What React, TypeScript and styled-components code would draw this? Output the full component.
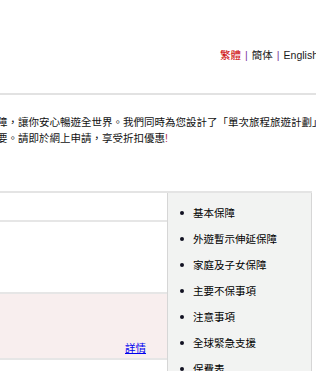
import React from "react";
import styled, { createGlobalStyle } from "styled-components";

const GlobalStyle = createGlobalStyle`
  html, body {
    margin: 0;
    padding: 0;
    overflow: hidden;
    background: #ffffff;
  }
  body {
    font-family: "Liberation Sans", "Noto Sans CJK TC", Arial, sans-serif;
    font-size: 10.5px;
    color: #111111;
  }
`;

const LINKS = [
  { label: "繁體", active: true },
  { label: "簡体", active: false },
  { label: "English", active: false },
];

const MENU = [
  "基本保障",
  "外遊暫示伸延保障",
  "家庭及子女保障",
  "主要不保事項",
  "注意事項",
  "全球緊急支援",
  "保費表",
];

const App = () => {
  return (
    <Page>
      <GlobalStyle />
      <Header>
        <LangNav>
          {LINKS.map((l, i) => (
            <React.Fragment key={l.label}>
              {i > 0 && <Pipe>|</Pipe>}
              <LangLink href="#" active={l.active}>
                {l.label}
              </LangLink>
            </React.Fragment>
          ))}
        </LangNav>
      </Header>

      <Intro>
        <Line>障，讓你安心暢遊全世界。我們同時為您設計了「單次旅程旅遊計劃」</Line>
        <Line>
          要。請即於網上申請，享受折扣優惠<Bang>!</Bang>
        </Line>
      </Intro>

      <InfoTable>
        <MainCol>
          <Row height={25} />
          <Row height={68} />
          <Row height={62} tint>
            <DetailLink href="#">詳情</DetailLink>
          </Row>
          <Row height={40} last />
        </MainCol>
        <Sidebar>
          <Menu>
            {MENU.map((m) => (
              <MenuItem key={m}>{m}</MenuItem>
            ))}
          </Menu>
        </Sidebar>
      </InfoTable>
    </Page>
  );
};

const Page = styled.div`
  width: 316px;
  height: 371px;
  overflow: hidden;
  display: flex;
  flex-direction: column;

  & > * {
    flex-shrink: 0;
  }
`;

const Header = styled.div`
  height: 46px;
  padding-top: 47px;
  border-bottom: 2px solid #e2e2e2;
  box-sizing: content-box;
`;

const LangNav = styled.div`
  display: flex;
  justify-content: flex-end;
  align-items: center;
  line-height: 16px;
  margin-right: -2px;
  white-space: nowrap;
`;

const LangLink = styled.a<{ active?: boolean }>`
  color: ${(p) => (p.active ? "#cc0000" : "#1a1a1a")};
  text-decoration: none;
`;

const Pipe = styled.span`
  color: #7a3a9a;
  margin: 0 4px;
`;

const Intro = styled.div`
  margin: 19px 0 45px -3px;
  line-height: 16px;
`;

const Line = styled.div`
  white-space: nowrap;
`;

const Bang = styled.span`
  color: #b03050;
`;

const InfoTable = styled.div`
  display: flex;
  flex: 1 0 auto;
  margin-right: 4px;
  border-top: 2px solid #e4e4e4;
`;

const MainCol = styled.div`
  width: 167px;
  display: flex;
  flex-direction: column;
`;

const Row = styled.div<{ height: number; tint?: boolean; last?: boolean }>`
  height: ${(p) => p.height}px;
  flex-shrink: 0;
  background: ${(p) => (p.tint ? "#f8eeee" : "#ffffff")};
  border-bottom: ${(p) => (p.last ? "none" : "2px solid #e6e6e6")};
  display: flex;
  justify-content: flex-end;
  align-items: flex-end;
  padding: 0 21px 2px 0;
  box-sizing: content-box;
  line-height: 16px;
`;

const DetailLink = styled.a`
  color: #0000ee;
  text-decoration: underline;
`;

const Sidebar = styled.div`
  flex: 1;
  background: #f2f3f2;
  border-left: 1px solid #d6d6d6;
  border-right: 1px solid #d6d6d6;
`;

const Menu = styled.ul`
  list-style: none;
  margin: 0;
  padding: 7px 0 0 0;
`;

const MenuItem = styled.li`
  position: relative;
  line-height: 26px;
  padding-left: 25px;
  white-space: nowrap;
  color: #000000;

  &::before {
    content: "";
    position: absolute;
    left: 12px;
    top: 11px;
    width: 4px;
    height: 4px;
    border-radius: 50%;
    background: #111122;
  }
`;

export default App;
